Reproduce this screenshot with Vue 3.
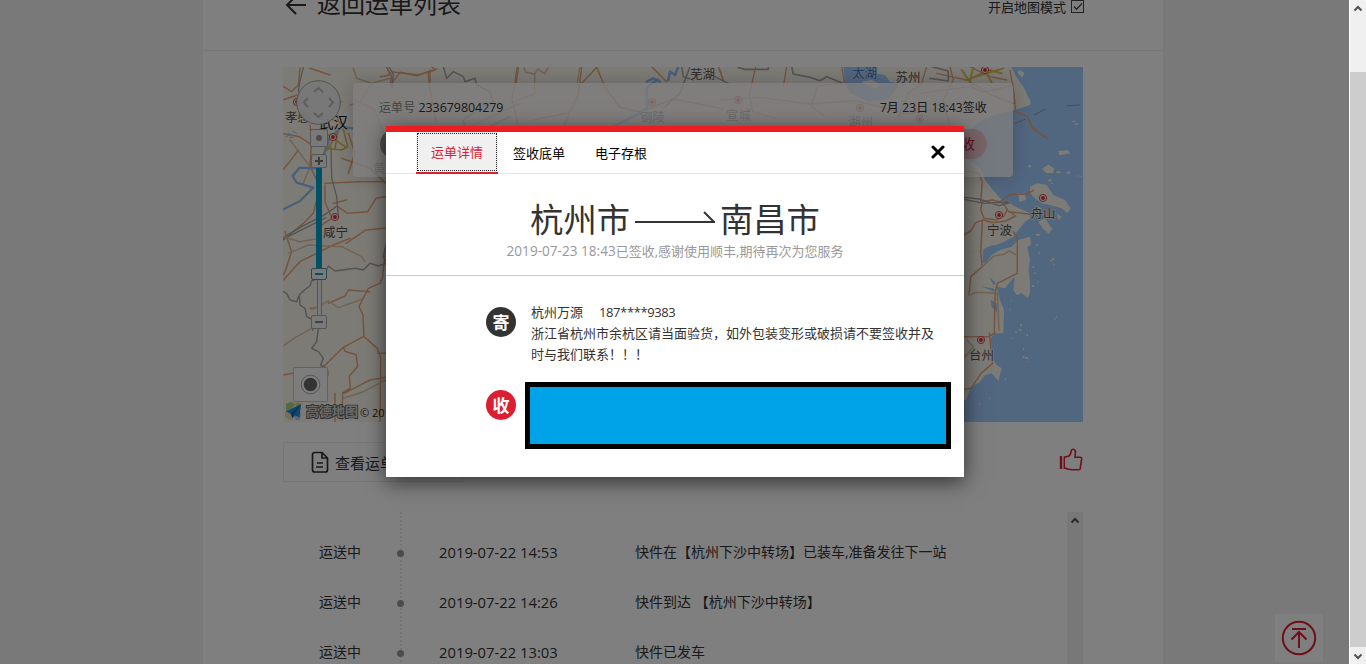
<script setup>
const tabs = ['运单详情', '签收底单', '电子存根']
const events = [
  { state: '运送中', time: '2019-07-22 14:53', text: '快件在【杭州下沙中转场】已装车,准备发往下一站' },
  { state: '运送中', time: '2019-07-22 14:26', text: '快件到达 【杭州下沙中转场】' },
  { state: '运送中', time: '2019-07-22 13:03', text: '快件已发车' },
]
const cities = [
  [285, 121.5, '孝感'], [373, 173, '黄石'], [323, 237, '咸宁'], [690, 79, '芜湖'],
  [640, 122, '铜陵'], [726, 120, '宣城'], [848, 127, '湖州'], [895.5, 82, '苏州'],
  [1030.5, 218, '舟山'], [987, 235, '宁波'], [969, 360, '台州'],
]
const pins = [
  [297, 102], [333, 137], [335, 217], [652, 102], [738, 100], [860, 108],
  [920, 119], [985, 70], [1043, 198], [999, 215], [981, 340],
]
const islets = [
  [374, 10, 10], [368, 2, 6], [235, 136, 8], [300, 155, 9], [318, 154, 14], [350, 155, 10], [382, 166, 4], [392, 167, 3],
  [295, 178, 9], [303, 188, 5], [258, 342, 12], [278, 311, 14], [300, 325, 8], [258, 372, 5], [265, 395, 4],
  [300, 420, 7], [306, 414, 6], [311, 431, 3], [318, 588, 3], [313, 594, 3], [210, 612, 5], [206, 628, 9],
  [196, 634, 4], [230, 642, 4], [184, 652, 3], [218, 709, 6], [227, 711, 6], [232, 723, 3], [219, 685, 3],
  [248, 438, 5], [252, 458, 5], [262, 484, 3], [246, 495, 6], [182, 540, 3], [178, 566, 3], [165, 775, 3],
  [118, 833, 3], [88, 850, 3],
]
</script>

<template>
  <div class="window">
    <div class="viewport">
      <main class="sheet">
        <header class="head">
          <div class="back">
            <svg width="22" height="22" viewBox="0 0 22 22" fill="none" stroke="#333" stroke-width="2"><path d="M21 11H2M11 2 2 11l9 9" /></svg>
            <h1>返回运单列表</h1>
          </div>
          <div class="mode">
            <span>开启地图模式</span>
            <svg width="14" height="14" viewBox="0 0 14 14" fill="none" stroke="#444"><rect x=".5" y=".5" width="12" height="12" /><path d="m3 6.500 2.500 2.700L11 3.500" stroke-width="1.300" /></svg>
          </div>
        </header>

        <section class="map">
          <svg class="tiles" width="800" height="355" viewBox="283 67 800 355" stroke-linejoin="round" stroke-linecap="round">
            <rect x="283" y="67" width="800" height="355" fill="#a3cdff" />
            <g transform="translate(950 120) scale(.33333)" fill="#fbf7ed">
              <path d="M-2010-170H180L195-135 220-100 242-55 240-45 195-30 130-15 80 10 50 40 20 70 20 105 42 115 75 130 95 150 105 180 125 205 150 235 165 247 178 250 200 262 240 280 240 295 225 305 205 330 190 350 150 372 120 378 100 388 98 430 110 425 125 405 150 390 185 380 205 360 240 350 243 375 232 380 240 420 236 450 240 490 240 515 235 535 215 520 200 525 190 510 195 470 180 485 165 505 140 500 150 540 162 570 160 640 135 640 122 655 130 720 140 735 155 745 145 782 125 760 105 765 90 785 60 805 50 838 20 850 20 915H-2010Z" />
              <path d="M240 200 262 190 290 195 310 225 345 240 362 265 352 280 335 265 300 255 275 250 255 235 240 220ZM205 222 225 218 228 240 208 246ZM276 146 295 134 312 145 310 158 290 160ZM265 305 285 295 305 325 298 343 280 328ZM325 93 352 90 362 100 328 106ZM265 260 275 265 250 285ZM320 280 335 290 325 300Z" />
              <path d="M183-148 195-140 195-130 185-138ZM207-150 223-142 217-127 203-141Z" />
              <rect v-for="(p, i) in islets" :key="i" :x="p[0]" :y="p[1]" :width="p[2]" :height="4 + (i % 3)" />
              <path d="M118 470 138 490 130 495ZM95 500 130 505 135 515ZM122 540 140 550 142 580 125 560ZM105 395 118 402 112 420ZM130 380 160 365 150 375ZM45 410 90 385 70 395Z" fill="#a3cdff" />
            </g>

            <g transform="translate(720 60) scale(.33333)" fill="none">
              <path d="M370 10h105l10 30 35 10 15 28-30 40-60 8-50-25-20-30Z" fill="#a3cdff" />
              <path d="M425 65l30-5 30 15-25 12ZM460 20h60l15 50-25-5-15-20-35-5Z" fill="#fbf7ed" />
              <path d="M0 30l10 35M108 15l-20 90 10 50 70 20M200 20l-10 60M365 18l8 50-80 10-20 60 40 30M620 20l-15 50-40 30-30 70M650 40l90 20 60 35 80-20M690 20l10 40-30 60 20 80M600 100l150-20 130 50M0 120l120-8 150 20 140-10 150 40 120-20M750 20l60 30 50 10M870 30l12 70 5 55 35 15 15 35 45 30" stroke="#eaa97e" stroke-width="4" />
              <path d="M725 30l20 30 60-30 40 10M760 20l-10 45M790 20l25 48M735 60l115-35" stroke="#dcc55a" stroke-width="6" />
              <path d="M215 20l5 22 50 10 30 10 20-12 45 18M55 22l20 6h70v-8M630 55l55 8v-30l-50-13" stroke="#aaa8a8" stroke-width="5" />
              <path d="M885 190l30-12M943 165l32-18M1040 137l38-2" stroke="#969aa0" stroke-width="3" />
            </g>

            <g transform="translate(950 120) scale(.33333)" fill="none" stroke="#eaa97e" stroke-width="4.500">
              <path d="M42 345l20-12 15-25 22-8 30 8 38-5 30-15-20-15M42 152l45 8 10 25-5 60M150 245l30-22 50 0 20-12M97 245l30-5 30 8 15 20-10 20-25 12-35-5-10-25ZM175 275l65 8M97 305l-5 90 5 45-35 30-5 55M190 335l12 20v105l-60 30-7 30-2 120-18 10-73 0M118 640l10 90-35 30-30 45-20 3M238 0l5 15 25 25" />
              <path d="M97 440l35-32 30-5 15-10 20 10M62 525l15-8 65 3 5 110M50 660l20 20-25 30" stroke="#e2c5a5" />
              <path d="M42 232l45 5 60 20 30-8M42 238l60 12 70-4" stroke="#aaa8a8" stroke-width="4" />
            </g>

            <g transform="translate(380 60) scale(.33333)" fill="none" stroke="#eaa97e" stroke-width="4.500">
              <path d="M0 50l30-5-10-25M35 35l80 10 50-15-10-10M145 40l3 35 20 110M412 20l-8 55-8 40 20 90M605 70l45-48 25 60 45 60 60 15 100-40 150 30M815 20l45 45M1015 20l15 40M550 210l15-45 30-60 10-85M460 180l100-20" />
              <path d="M432 22l5 15 27 5 10-15 20 15 10-20M464 42v60l-55 20M600 20l-10 60M270 200l150-70" stroke="#e2c5a5" />
              <path d="M190 20l10 35 20-20 30 15 5 15 30-10 5 20 40 20 10 30-40 20-50 35 5 30M330 200l60-30" stroke="#aaa8a8" />
              <path d="M680 210l90-45 30-20 0-60 15-15 20-10M865 60l5-25 15 10 10-25M800 65l20-10 20 10" stroke="#94bff9" stroke-width="8" />
              <path d="M905 20l5 30 30 10M1005 50l40 20M930 20l-30 80-45 40" stroke="#aaa8a8" />
            </g>

            <g transform="translate(270 0) scale(.33333)" fill="none" stroke="#eaa97e" stroke-width="4.500">
              <path d="M90 205l-5 50-20 20-25-15M350 202l15 25-5 30 30-40 50 10 60-20M480 210v35M745 205l-7 45M38 300l60-20M120 375l5 45-5 80 30 60-20 80-30 30-60 50M118 430l-30-20-50-10M85 450l-30 40-17 20M165 550l100-5 80 0M190 610l40-10M165 555l0 50 20 50-45 30M348 590l-30 5-25 40-60 5-30-20M348 685l-60 5-60 40M215 475l85 30 48 45M235 400l20 60-20 60M180 225l-60-20" />
              <path d="M250 205l10 30 45 15 55-15M305 250l-35 55-30 10M60 420l60 80-20 50M210 370l-15-45 20-20M255 300l60 30 30 80" stroke="#e2c5a5" />
              <path d="M100 203l-10 40-5 30 12 20M358 202l12 20-4 40M183 440l2 95 15 55 5 60M40 712l60-35 60-30 40-28M38 718l130-65" stroke="#aaa8a8" stroke-width="4" />
              <path d="M165 445l50 5 18-10-15-60-15-20M175 405l50 35M205 385l-10 60M170 450l30-45" stroke="#d6be50" stroke-width="5" />
              <path d="M248 385l-30-5-40 35-15 45-25 38M138 505l-50-2-20 25 12 20 50 15-40 40-50 25" stroke="#94bff9" stroke-width="7" />
              <path d="M48 410l14-8M68 394l12 6M60 412h8M54 400h3" stroke="#94bff9" stroke-width="3" />
            </g>

            <g transform="translate(270 220) scale(.33333)" fill="none" stroke="#eaa97e" stroke-width="4.500">
              <path d="M45 35l20 60-20 60-5 10M40 180l50-55 100-50 50-20M348 70l-10 100-8 20-35 15-28 55 12 25 3 65 40 35 10 30-2 190M175 250l50-22 10-18 65 5M280 350l-60 32-60 58-40 10-80 15M220 382l5 12 33 10 5 35-25 30 3 35-23 15-2 80M348 472l-48 8-78 40M348 400h-25M195 520v90M120 265h15" />
              <path d="M40 50l50 15 60-10M55 100l60-25 100 5 60 30 10 15M125 268l50-25 30 20 70-25M40 378l35-25 55-30M220 535l60-20 68-35" stroke="#e2c5a5" />
              <path d="M40 215l10 5 10 20 20 5 8-20 15-15 17-12 5-15 35-15 15-30 20 15 60-8 25 5 20-20 25 8 23-8M88 225l2 30 15 10 5 25 20 10-2 30M145 325l-5 40-15 20 20 10 15 20-8 20 20 10 2 20M345 85l-5 25 8 15" stroke="#aaa8a8" />
            </g>

            <g v-for="(p, i) in pins" :key="'p' + i" :transform="`translate(${p[0]} ${p[1]})`">
              <circle r="3.600" fill="#fff3ee" stroke="#dc4652" stroke-width="1" />
              <circle r="1.900" fill="#dc3038" />
            </g>
            <g font-size="12.500" fill="#555" stroke="#fbf7ed" stroke-width="1.500" paint-order="stroke">
              <text v-for="c in cities" :key="c[2]" :x="c[0]" :y="c[1]">{{ c[2] }}</text>
              <text x="852" y="78" fill="#4a77b8" stroke="#b9d7fc">太湖</text>
              <text x="319" y="128" font-size="14.500" fill="#111">武汉</text>
            </g>
          </svg>

          <svg class="controls" width="110" height="355" viewBox="283 67 110 355" fill="none">
            <circle cx="318.500" cy="102.500" r="21.800" fill="#efefef" fill-opacity=".96" stroke="#a5a5a5" />
            <path d="m314 92 4.500-4 4.500 4M314 113l4.500 4 4.500-4M308 98l-4 4.500 4 4.500M329 98l4 4.500-4 4.500" stroke="#bbb" stroke-width="2" />
            <rect x="310.500" y="129.500" width="17" height="17" rx="1.500" fill="#f4f4f4" stroke="#aaa" />
            <circle cx="319" cy="138" r="3" fill="#999" />
            <rect x="317.500" y="274" width="4" height="45" fill="#f2f2f2" stroke="#aaa" />
            <path d="M316 167h6v105h-6Z" fill="#00a3d1" />
            <rect x="311.500" y="154.500" width="15" height="13" rx="1.500" fill="#f4f4f4" stroke="#aaa" />
            <path d="M315 161h8M319 157v8" stroke="#777" stroke-width="2" />
            <rect x="311.500" y="268.500" width="15" height="11" rx="1.500" fill="#f4f4f4" stroke="#5c8ea6" />
            <path d="M315 274h8" stroke="#00a3d1" stroke-width="2" />
            <rect x="311.500" y="315.500" width="15" height="13" rx="1.500" fill="#f4f4f4" stroke="#aaa" />
            <path d="M315 322h8" stroke="#888" stroke-width="2" />
            <rect x="293.500" y="367.500" width="34" height="34" rx="1.500" fill="#fafafa" stroke="#c5c5c5" />
            <circle cx="310.500" cy="384.500" r="9.300" fill="#fff" stroke="#aaa" />
            <circle cx="310.500" cy="384.500" r="6.700" fill="#666" />
            <path d="M286 404q5-4 9 0l-4 8-5 0Z" fill="#a9d58c" /><path d="M285 412l8 2 0 6q-7 0-8-4Z" fill="#e7ddb0" /><path d="M295 403q6-2 6 5l-4 5Z" fill="#efd45e" /><path d="M294 414l7-1-1 7h-5Z" fill="#b7cdf0" />
            <path d="m301 404-15 7.500 5 2.500 1.500 4 3-2.500 4 2Z" fill="#1b8fe3" /><path d="m301 404-10 10 1.500 4 1.500-4Z" fill="#1261a8" />
            <text x="306" y="416" font-size="13" font-weight="bold" fill="#d8d5ce" stroke="#666" stroke-width="1.800" paint-order="stroke" textLength="52">高德地图</text>
            <text x="360" y="416.500" font-size="11" fill="#222">© 2019 AutoNavi</text>
          </svg>

          <div class="ticket">
            <div class="ticket-line">
              <span><em>运单号</em> <b class="no">233679804279</b></span>
              <span class="signed">7月 23日 18:43签收</span>
            </div>
            <div class="ticket-route">
              <i class="from"></i>
              <span class="done">签收</span>
            </div>
          </div>
        </section>

        <div class="actions">
          <div class="view">
            <svg width="18" height="22" viewBox="0 0 18 22" fill="none" stroke="#333" stroke-width="1.700"><path d="M3 1.500h8L16.500 7v12a2 2 0 0 1-2 2h-11a2 2 0 0 1-2-2V3.500a2 2 0 0 1 2-2ZM11 1.500V7h5.500M6 12h6M5 16h7" /></svg>
            <span>查看运单详情</span>
          </div>
          <svg width="24" height="23" viewBox="0 0 24 23" fill="none" stroke="#dc1e32" stroke-width="1.600"><path d="M2 8v13" stroke-width="2.400" /><path d="M5.300 8.500V21" stroke-width="1.500" /><path d="M5.500 20q4 1.700 8 1.700h6.500q1 0 1.200-1l1.500-10q0-1.500-1.500-1.500H16l.5-6q-.5-2-2.300-2t-2 2Q11.500 8 8.500 8.500L5.500 9" /></svg>
        </div>

        <section class="log">
          <ul>
            <li v-for="e in events" :key="e.time">
              <span class="state">{{ e.state }}</span>
              <i class="dot"></i>
              <time>{{ e.time }}</time>
              <p>{{ e.text }}</p>
            </li>
          </ul>
          <div class="log-bar">
            <svg width="10" height="7" viewBox="0 0 10 7" fill="none" stroke="#555" stroke-width="2"><path d="m1.500 5.500 3.500-3.500 3.500 3.500" /></svg>
          </div>
        </section>
      </main>

      <div class="top">
        <svg width="36" height="36" viewBox="0 0 36 36" fill="none" stroke="#dc1e32" stroke-width="2"><circle cx="18" cy="18" r="16.200" /><path d="M11 9h14M18 28V12M10.500 19.500 18 12l7.500 7.500" /></svg>
      </div>
      <div class="mask"></div>

      <section class="dialog">
        <nav>
          <a v-for="(t, i) in tabs" :key="t" :class="{ on: i === 0 }"><span>{{ t }}</span></a>
          <svg class="close" width="14" height="14" viewBox="0 0 14 14" stroke="#000" stroke-width="3" stroke-linecap="round"><path d="m2 2 10 10M12 2 2 12" /></svg>
        </nav>
        <div class="route">
          <div class="cities">
            <span>杭州市</span>
            <svg width="80" height="14" viewBox="0 0 80 14" fill="none" stroke="#333" stroke-width="2"><path d="M0 12h80M69 2l10 10" /></svg>
            <span>南昌市</span>
          </div>
          <p><span class="stamp">2019-07-23 18:43</span>已签收,感谢使用顺丰,期待再次为您服务</p>
        </div>
        <div class="party sender">
          <i>寄</i>
          <div class="info">
            <div><span>杭州万源</span><span class="phone">187****9383</span></div>
            <div>浙江省杭州市余杭区请当面验货，如外包装变形或破损请不要签收并及时与我们联系！！！</div>
          </div>
        </div>
        <div class="party receiver">
          <i>收</i>
          <div class="hidden-info"></div>
        </div>
      </section>
    </div>

    <aside class="scroll">
      <svg width="10" height="7" viewBox="0 0 10 7" fill="none" stroke="#505050" stroke-width="2"><path d="m1.500 5.500 3.500-3.500 3.500 3.500" /></svg>
      <div class="thumb"></div>
      <svg width="10" height="7" viewBox="0 0 10 7" fill="none" stroke="#505050" stroke-width="2"><path d="m1.500 1.500 3.500 3.500 3.500-3.500" /></svg>
    </aside>
  </div>
</template>

<style>
body { margin: 0; overflow: hidden; }
</style>

<style scoped>
.window { display: flex; width: 1366px; height: 664px; overflow: hidden; font-family: "Open Sans", "Noto Sans CJK SC", sans-serif; color: #333; }
.window * { box-sizing: border-box; }
.window svg { display: block; flex: none; }
.viewport { position: relative; width: 1349px; height: 664px; background: #f2f2f2; overflow: hidden; }
.sheet { width: 960px; height: 664px; margin-left: 203px; background: #fff; overflow: hidden; }
.head { display: flex; justify-content: space-between; height: 51px; padding: 0 79px 0 82px; border-bottom: 1px solid #ececec; }
.back, .mode { display: flex; align-items: center; height: 32px; }
.back { margin-top: -12px; gap: 10px; }
.back svg { margin-top: 2px; }
h1 { margin: 0; font-size: 24px; line-height: 32px; font-weight: 400; }
.mode { margin: -10px -1px 0 0; gap: 5px; font-size: 13px; }
.mode svg { margin-top: 1px; }
.map { position: relative; width: 800px; height: 355px; margin: 16px 0 0 80px; overflow: hidden; }
.controls { position: absolute; left: 0; top: 0; }
.ticket { position: absolute; left: 70px; top: 16px; width: 660px; height: 94px; border-radius: 4px; background: rgba(255, 255, 255, .76); box-shadow: 0 0 20px rgba(0, 0, 0, .2); padding: 15px 26px 0; }
.ticket-line, .ticket-route { display: flex; justify-content: space-between; align-items: center; }
.ticket-line { height: 20px; font-size: 12px; line-height: 20px; }
.ticket em { font-style: normal; color: #888; letter-spacing: .1px; }
.no { font-weight: 400; font-size: 12.400px; }
.signed { letter-spacing: .12px; }
.ticket-route { padding-top: 11px; }
.from { width: 30px; height: 30px; margin-left: 1px; border-radius: 50%; background: #999; }
.done { width: 64px; height: 30px; border-radius: 15px; background: #f3c9cf; color: #c81430; font-size: 14px; line-height: 29px; padding-right: 12px; text-align: right; }
.actions { display: flex; justify-content: space-between; width: 800px; margin: 20px 0 0 80px; }
.actions > svg { margin: 6px 0 0; }
.view { display: flex; align-items: center; gap: 6px; width: 180px; height: 40px; padding-left: 27px; border: 1px solid #ececec; font-size: 15px; white-space: nowrap; }
.log { display: flex; justify-content: space-between; width: 800px; height: 152px; margin: 30px 0 0 80px; overflow: hidden; }
ul { width: 784px; margin: 0; padding: 15px 0 0 36px; list-style: none; background: repeating-linear-gradient(#e8e8e8 0 2px, transparent 2px 4px) 117px 0 / 2px 100% no-repeat; }
li { display: flex; align-items: center; height: 50px; font-size: 14px; line-height: 20px; white-space: nowrap; }
.state { width: 78px; }
.dot { width: 7px; height: 7px; margin: 2px 35px 0 0; border-radius: 50%; background: #999; }
time { width: 196px; font-size: 14.800px; }
li p { margin: 0; }
.log-bar { width: 16px; height: 152px; padding: 5px 3px; background: #f0f0f0; }
.top { position: absolute; left: 1275px; top: 614px; display: flex; justify-content: center; align-items: center; width: 48px; height: 48px; background: #fff; }
.mask { position: absolute; inset: 0; background: rgba(0, 0, 0, .5); }
.dialog { position: absolute; left: 386px; top: 126px; width: 578px; height: 351px; border-top: 6px solid #ed1c20; background: #fff; box-shadow: 0 5px 20px rgba(0, 0, 0, .6); }
nav { display: flex; height: 42px; padding-left: 30px; border-bottom: 1px solid #e5e5e5; font-size: 13px; color: #000; }
nav a { display: flex; width: 82px; height: 42px; justify-content: center; line-height: 43px; }
nav a.on { border-bottom: 2px solid #dc1e32; color: #dc1e32; background: #f0f0f0; padding: 1px; line-height: 39px; }
nav a.on span { width: 80px; height: 38px; outline: 1px dotted #222; outline-offset: -1px; text-align: center; }
.close { margin: 13px 0 0 269px; }
.route { height: 102px; padding-top: 21px; border-bottom: 1px solid #ccc; }
.cities { display: flex; justify-content: center; height: 48px; line-height: 48px; font-size: 33.300px; gap: 5px; }
.cities svg { margin-top: 15px; }
.route p { margin: -2px 0 0; height: 20px; line-height: 20px; font-size: 13px; color: #999; text-align: center; white-space: nowrap; }
.stamp { font-size: 13.600px; }
.party { display: flex; padding-left: 100px; font-size: 13px; line-height: 21px; }
.party i { flex: none; width: 30px; height: 30px; border-radius: 50%; background: #333; color: #fff; font: 700 17px/29px "Noto Sans CJK SC", sans-serif; text-align: center; }
.sender { padding-top: 25px; height: 106px; }
.sender i { margin-top: 6px; }
.info { width: 406px; margin: 1px 0 0 15px; }
.phone { margin-left: 16px; letter-spacing: -.4px; }
.receiver i { margin-top: 8px; background: #dc1e32; }
.hidden-info { width: 426px; height: 67px; margin-left: 9px; border: 5px solid #000; background: #00a2e8; }
.scroll { display: flex; flex-direction: column; align-items: center; width: 17px; height: 664px; padding-top: 5px; background: #f0f0f0; border-left: 1px solid #fff; }
.thumb { width: 16px; height: 575px; margin: 60px 0 6px; background: #cdcdcd; }
</style>
